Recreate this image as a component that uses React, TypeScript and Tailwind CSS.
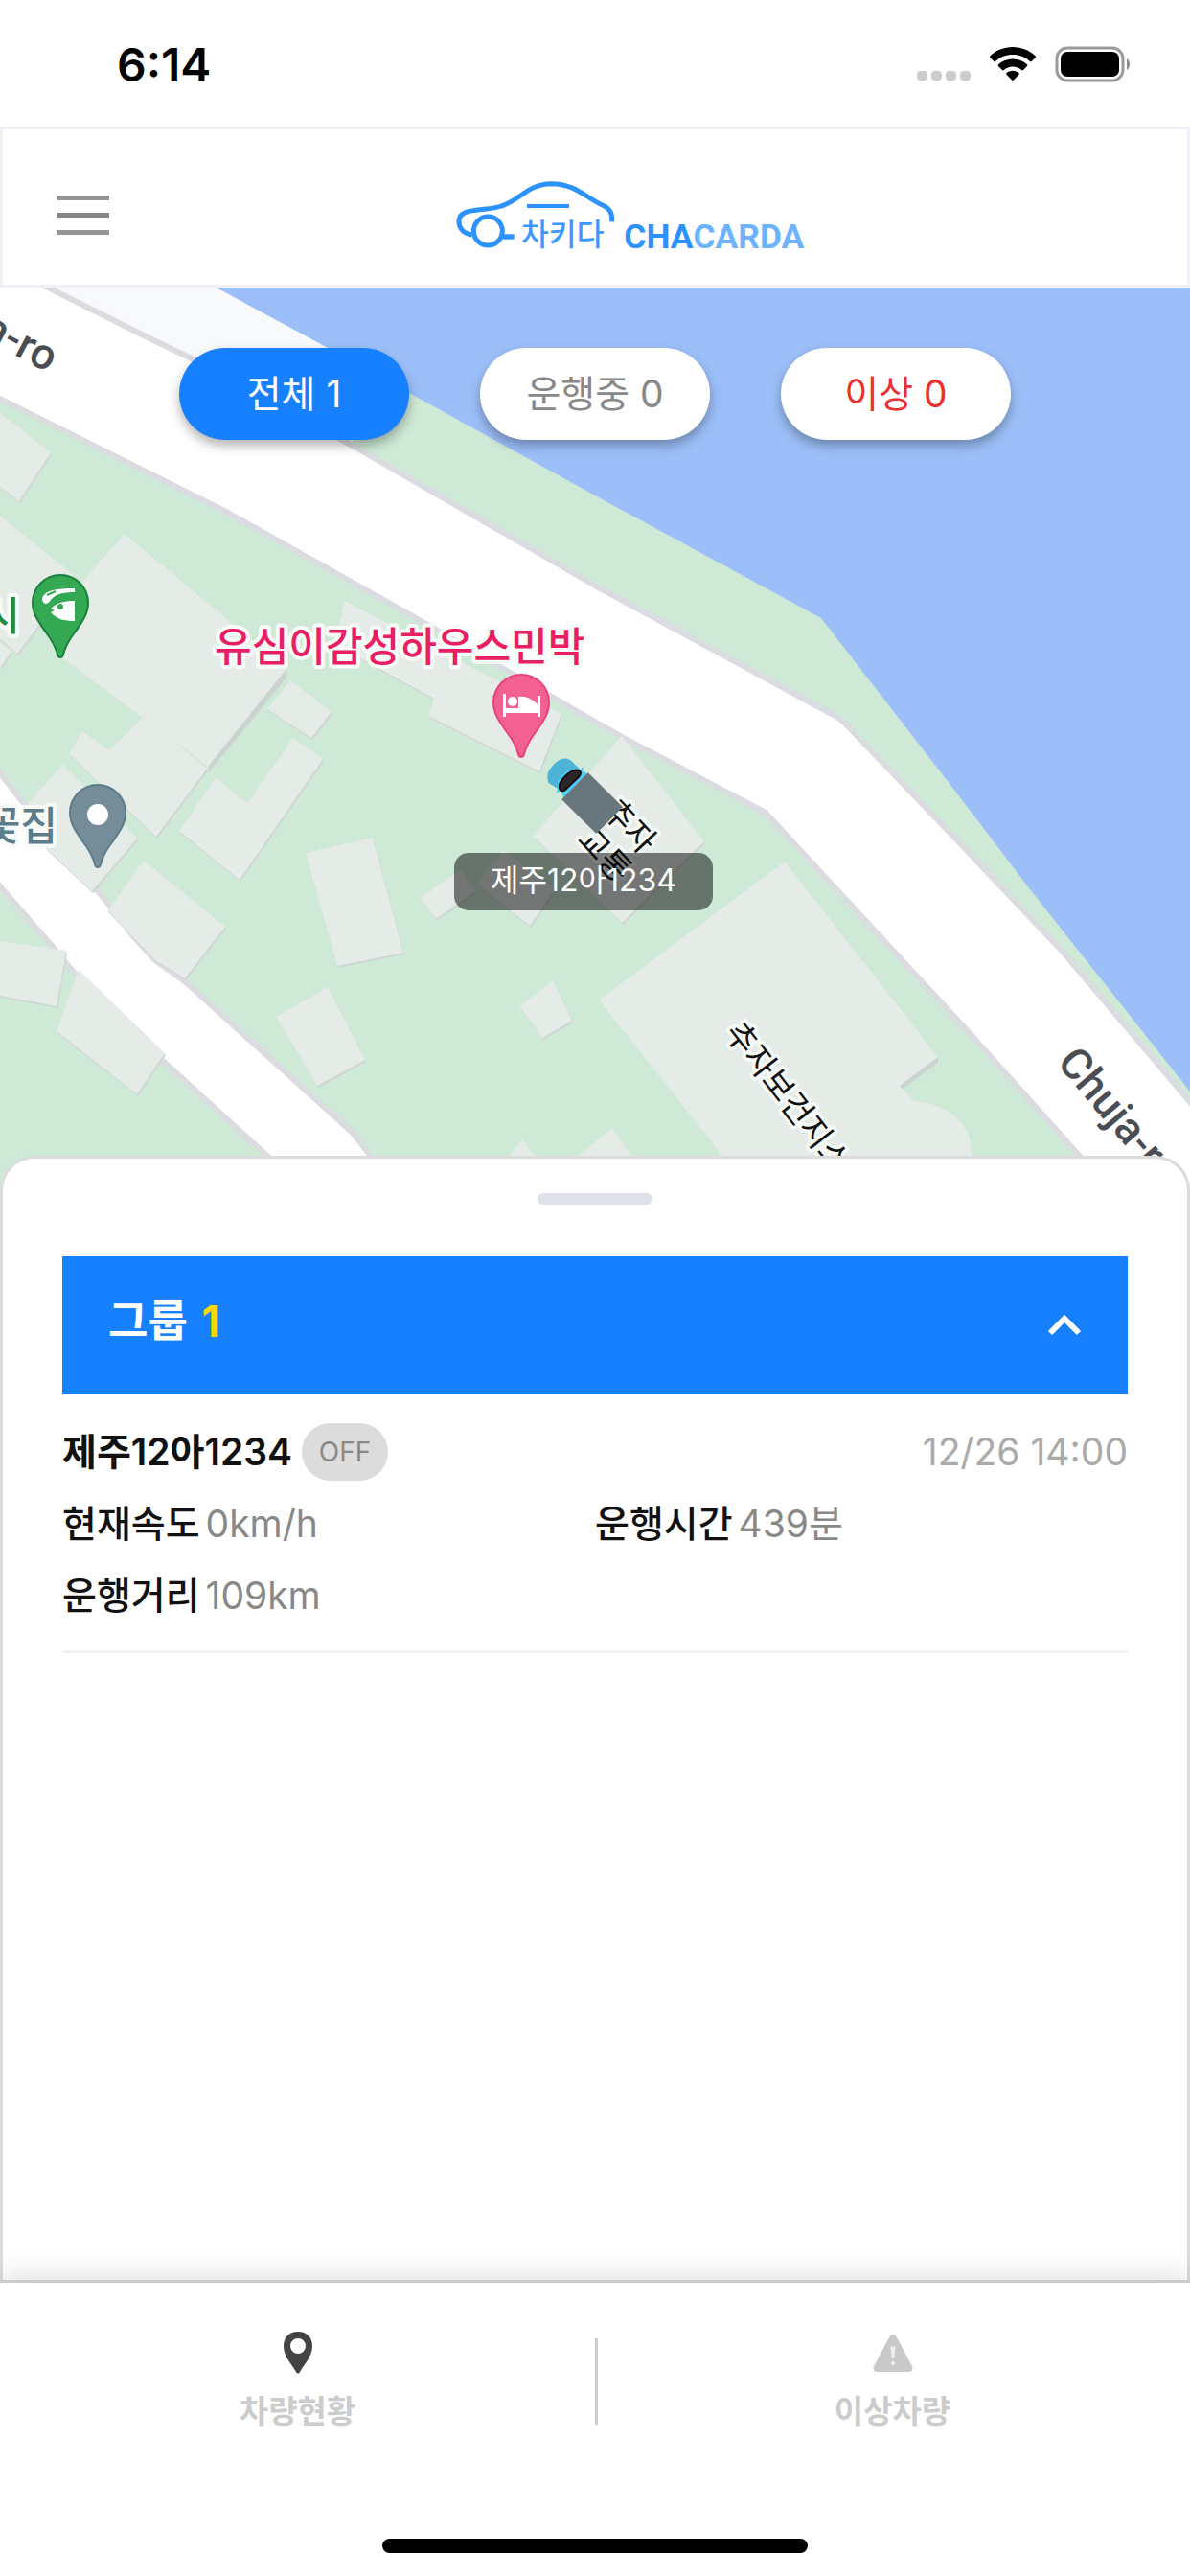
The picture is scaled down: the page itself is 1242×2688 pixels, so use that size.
import { useState } from "react";
import clsx from "clsx";

const filters = [
  { id: "all", label: "전체", count: 1, color: "text-[#888888]" },
  { id: "running", label: "운행중", count: 0, color: "text-[#888888]" },
  { id: "error", label: "이상", count: 0, color: "text-[#ee2f2f]" },
];

const vehicle = {
  plate: "제주12아1234",
  status: "OFF",
  updatedAt: "12/26 14:00",
  stats: [
    { label: "현재속도", value: "0km/h" },
    { label: "운행시간", value: "439분" },
    { label: "운행거리", value: "109km" },
  ],
};

const buildings = [
  "0,431 53,472 20,523 0,508",
  "0,538 77,600 50,640 18,682 0,667",
  "0,670 12,680 0,697",
  "360,627 586,745 563,805 447,747 453,729 349,672",
  "303,710 346,743 325,770 279,740",
  "86,763 114,783 150,748 216,802 163,873 72,787",
  "65,798 143,875 96,930 48,885 28,840",
  "150,898 235,967 193,1021 162,1002 112,950",
  "225,812 258,838 306,770 337,792 250,918 187,867",
  "319,890 389,874 421,994 352,1008",
  "342,1030 381,1106 331,1133 288,1061",
  "481,907 495,931 455,959 438,937",
  "524,887 580,927 553,966 498,923",
  "577,1023 597,1065 566,1083 542,1050",
  "0,982 69,992 59,1050 0,1039",
  "82,1012 172,1099 143,1142 59,1076",
  "545,1188 590,1250 500,1250",
  "639,1177 690,1250 550,1250",
  "649,768 735,878 649,963 556,872",
];

const pinPath =
  "M30 1C14 1 1 14 1 30c0 12 7 21 14 31 7 9 10 15 12 23 1 4 5 4 6 0 2-8 5-14 12-23 7-10 14-19 14-31C59 14 46 1 30 1z";

function StatusBar() {
  return (
    <div className="flex h-[132px] items-start justify-between pt-12 pr-[61px] pl-[122px]">
      <span className="text-[48px] leading-[40px] font-semibold text-black">6:14</span>
      <div className="flex items-center gap-5">
        <svg className="mt-6 h-2.5 w-14" viewBox="0 0 56 10" fill="#cccccc">
          {[0, 15, 30, 45].map((x) => (
            <rect key={x} x={x} width="11" height="10" rx="4" />
          ))}
        </svg>
        <svg className="h-9 w-12" viewBox="0 0 48 36">
          <path d="M24 0c9 0 17.500 3.500 23.700 9.400.5.5.5 1.200 0 1.700l-4 4c-.5.5-1.200.5-1.700 0C37.200 10.600 31 8 24 8S10.800 10.600 6 15.100c-.5.5-1.200.5-1.700 0l-4-4c-.5-.5-.5-1.200 0-1.700C6.500 3.500 15 0 24 0z" />
          <path d="M24 12.500c5.700 0 11 2.200 15 5.800.5.500.5 1.200 0 1.700l-4 4c-.5.5-1.200.5-1.700 0A14 14 0 0 0 24 20.400 14 14 0 0 0 14.700 24c-.5.5-1.200.5-1.700 0l-4-4c-.5-.5-.5-1.200 0-1.700 4-3.600 9.300-5.800 15-5.800z" />
          <path d="M24 24.800c2.400 0 4.600.9 6.400 2.300.5.500.5 1.200.1 1.700l-5.600 5.800c-.5.5-1.300.5-1.800 0l-5.600-5.800c-.4-.5-.4-1.200.1-1.700 1.800-1.400 4-2.300 6.400-2.300z" />
        </svg>
        <svg className="h-[38px] w-20" viewBox="0 0 80 38">
          <rect x="2" y="2" width="69" height="34" rx="11" fill="none" stroke="#9a9a9a" strokeWidth="3" />
          <rect x="6" y="6" width="61" height="26" rx="7" />
          <path d="M75 13c4 2 4 10 0 12z" fill="#8c8c8c" />
        </svg>
      </div>
    </div>
  );
}

function Logo() {
  return (
    <svg
      className="h-[69px] w-[360px] shrink-0 overflow-visible"
      viewBox="111 57 1080 207"
      role="img"
      aria-label="차키다 CHACARDA"
    >
      <g fill="none" stroke="#2b92ff">
        <path
          d="M158 222C130 218 117 200 117 180c0-20 13-28 33-32 40-8 70-6 100-16 60-18 80-68 155-70 75 0 105 40 155 64 28 12 38 24 36 55"
          strokeWidth="15"
        />
        <circle cx="208" cy="210" r="45" strokeWidth="15" />
        <path d="M255 228h35" strokeWidth="16" />
        <path d="M330 132h132" strokeWidth="12" />
      </g>
      <text x="312" y="256" fontSize="94" fontWeight="500" fill="#3a99ff" className="font-['Noto_Sans_CJK_KR',sans-serif]">
        차키다
      </text>
      <text x="634" y="263" fontSize="106" fontWeight="700" fill="#2b92ff" className="font-['Roboto',sans-serif]">
        CHA<tspan fill="#6db3ff">CARDA</tspan>
      </text>
    </svg>
  );
}

function Truck() {
  return (
    <g transform="translate(560 770) scale(0.3333)">
      <path d="M38 142C30 118 34 106 50 88C68 68 86 58 106 70L136 98L72 162Z" fill="#4cb4d6" />
      <path d="M60 174L66 160C60 126 96 94 130 98L138 98L146 90L144 104L160 112L86 190L76 166Z" fill="#45d0fa" />
      <path
        d="M72 158C66 138 104 98 130 101C140 104 140 112 134 120L88 164C80 168 74 166 72 158Z"
        fill="#2a2726"
        stroke="#1b0c0a"
        strokeWidth="6"
      />
      <path d="M163 110L270 216L187 300L80 194Z" fill="#68767d" />
      <path d="M163 110L80 194" stroke="#85696c" strokeWidth="4" />
    </g>
  );
}

function MapCanvas() {
  return (
    <svg
      className="h-full w-full font-['Noto_Sans_CJK_KR',sans-serif]"
      viewBox="0 300 1242 942"
      preserveAspectRatio="xMidYMid slice"
    >
      <rect y="300" width="1242" height="942" fill="#cee9d6" />
      <path d="M225 300L340 362L621 517L857 645L992 819L1075 928L1242 1139V300Z" fill="#9cbff9" />
      <path d="M30 290L207 290L340 362L368 378L368 463Z" fill="#f8f9fb" />

      {/* roads */}
      <g fill="#ffffff" stroke="#dbdce1" strokeWidth="6" strokeLinejoin="round">
        <path d="M-20 265L50 300L150 350L200 374L368 465L621 611L842 731L870 746Q878 750 885 758L1000 878L1109 993L1242 1150L1300 1220V1260H1170L1124 1203L1010 1076L799 848L649 769L621 753L436 646L238 535L-10 411Z" />
        <path d="M-10 795L0 807L26 840L113 943L139 977L162 1002L194 1025L368 1182L388 1208L420 1260H335L281 1208L170 1107L79 1017L55 988L0 925L-10 912Z" />
      </g>

      {/* buildings, each with a thin shade on its lower right side */}
      {buildings.map((points) => (
        <g key={points}>
          <polygon points={points} fill="#cfd6d4" transform="translate(1 2)" />
          <polygon points={points} fill="#e5ebe7" />
        </g>
      ))}
      <path d="M299 698V707L218 806L217 795Z" fill="#cbd3d1" />
      <path d="M130 557L299 698L217 800L63 685L50 662L89 603Z" fill="#e5ebe7" />
      <path d="M979 1103V1109L941 1137L939 1130Z" fill="#cbd3d1" />
      <path
        d="M819 899L979 1103L939 1133L954 1149C985 1151 1013 1170 1014 1200L1015 1250H783L754 1206L627 1046V1042Z"
        fill="#e5ebe7"
      />

      {/* street and place names */}
      <g className="font-['Roboto',sans-serif]" fill="#4a4e54" fontSize="45" fontWeight="500">
        <text transform="translate(50 389) rotate(28)" textAnchor="end">
          Chuja-ro
        </text>
        <text transform="translate(1102 1109) rotate(50)">Chuja-ro</text>
      </g>
      <g fontSize="34" fill="#111111" stroke="#f5faf7" strokeWidth="7" strokeLinejoin="round" paintOrder="stroke">
        <text transform="translate(755 1078) rotate(52)">추자보건지소</text>
        <text transform="translate(627 847) rotate(47)">추자</text>
        <text transform="translate(601 877) rotate(47)">교통</text>
      </g>
      <g fontSize="42" fontWeight="500" stroke="#f7fbf8" strokeWidth="8" strokeLinejoin="round" paintOrder="stroke">
        <text x="224" y="690" fill="#e91e63">
          유심이감성하우스민박
        </text>
        <text x="21" y="658" textAnchor="end" fill="#1e8e3e">
          시
        </text>
        <text x="60" y="877" textAnchor="end" fill="#5b7c8a">
          꽃집
        </text>
      </g>

      {/* place markers */}
      <g transform="translate(33 599)">
        <path d={pinPath} fill="#34a853" stroke="#188038" strokeWidth="2" />
        <path d="M11 25C14 17 26 15 45 15v4C32 19 25 21 20 27c-2 3-4 4-6 4-2-1-3-3-3-6z" fill="#ffffff" />
        <path d="M45 28v21c-11 0-19-2-25-9l4-2-4-2c6-6 14-8 25-8z" fill="#ffffff" />
        <circle cx="30" cy="34" r="3" fill="#34a853" />
        <path d="M16 22l9-4" stroke="#34a853" strokeWidth="2" />
      </g>
      <g transform="translate(72 818)">
        <path d={pinPath} fill="#758d99" stroke="#5b7c8a" strokeWidth="2" />
        <circle cx="30" cy="32" r="11" fill="#ffffff" />
      </g>
      <g transform="translate(514 703)">
        <path d={pinPath} fill="#f26192" stroke="#ec407a" strokeWidth="2" />
        <g fill="#ffffff">
          <path d="M11 21h3v15h33V23h3v22h-3v-4H14v4h-3z" />
          <circle cx="21" cy="29" r="5" />
          <path d="M27 24c8-1 14 2 20 8l3-8v12H27z" />
        </g>
      </g>
      <Truck />
    </svg>
  );
}

function TabIcon({ name }: { name: string }) {
  if (name === "vehicles") {
    return (
      <svg className="h-[45px] w-[30px]" viewBox="0 0 30 45">
        <path
          fillRule="evenodd"
          fill="#444444"
          d="M15 0C6 0 0 6 0 15c0 11 8 18 13 27 1 2 3 2 4 0 5-9 13-16 13-27C30 6 24 0 15 0zm0 7a8 8 0 1 1 0 16 8 8 0 0 1 0-16z"
        />
      </svg>
    );
  }
  return (
    <svg className="h-[45px] w-[42px]" viewBox="0 0 42 45">
      <path d="M21 3c2 0 3 1 4 3l16 30c1 3 0 6-3 6H4c-3 0-4-3-3-6L17 6c1-2 2-3 4-3z" fill="#c9c9c9" />
      <path d="M20 17h2l-1 10z" fill="#eeeeee" stroke="#eeeeee" strokeWidth="3" />
      <circle cx="21" cy="33" r="2" fill="#eeeeee" />
    </svg>
  );
}

const tabs = [
  { id: "vehicles", label: "차량현황" },
  { id: "alerts", label: "이상차량" },
];

export default function App() {
  const [filter, setFilter] = useState("all");
  const [open, setOpen] = useState(true);

  return (
    <div className="flex min-h-screen flex-col bg-white font-['Inter','Noto_Sans_CJK_KR',sans-serif]">
      <StatusBar />

      <header className="grid h-[168px] grid-cols-[1fr_auto_1fr] items-center border-[3px] border-[#f0f1f6] pt-4">
        <button type="button" aria-label="메뉴" className="ml-[57px] flex w-[54px] flex-col gap-[13px]">
          <span className="h-[5px] bg-[#959595]" />
          <span className="h-[5px] bg-[#858585]" />
          <span className="h-[5px] bg-[#959595]" />
        </button>
        <div className="flex justify-center pl-[72px]">
          <Logo />
        </div>
      </header>

      <main className="flex flex-1 flex-col">
        {/* Map */}
        <section className="relative h-[942px] overflow-hidden">
          <MapCanvas />
          <div className="absolute inset-x-0 top-[63px] flex justify-center gap-[74px]">
            {filters.map((item) => (
              <button
                key={item.id}
                type="button"
                onClick={() => setFilter(item.id)}
                className={clsx(
                  "h-24 w-60 rounded-full text-[39px] leading-[60px] shadow-[0_6px_12px_rgba(0,0,0,0.3)]",
                  filter === item.id ? "bg-[#1780ff] text-white" : ["bg-white", item.color]
                )}
              >
                {item.label} {item.count}
              </button>
            ))}
          </div>
          <div className="absolute top-[590px] left-1/2 flex h-[60px] w-[270px] -translate-x-[147px] items-center justify-center rounded-[15px] bg-black/50 pb-0.5 text-[32px] leading-[48px] text-white">
            {vehicle.plate}
          </div>
        </section>

        {/* Bottom sheet */}
        <section className="relative -mt-9 flex-1 rounded-t-[36px] border-x-[3px] border-t-[3px] border-[#dcdcdc] bg-white px-[62px] pt-9">
          <div className="mx-auto h-3 w-[120px] rounded-full bg-[#dee1e7]" />
          <button
            type="button"
            aria-expanded={open}
            onClick={() => setOpen(!open)}
            className="mt-[54px] flex h-36 w-full items-center justify-between bg-[#1780ff] pr-12 pl-12 text-[45px] leading-[60px] font-bold text-white"
          >
            <span className="pb-2">
              그룹 <span className="ml-1 text-[#ffd800]">1</span>
            </span>
            <svg className={clsx("h-6 w-9", !open && "rotate-180")} viewBox="0 0 36 24" fill="none">
              <path d="M3 20L18 5l15 15" stroke="#ffffff" strokeWidth="6" />
            </svg>
          </button>

          {open && (
            <article className="border-b-[3px] border-[#f2f2f2] pt-[30px] pb-[27px] text-[39px] leading-[60px]">
              <div className="flex items-center justify-between">
                <h2 className="flex items-center gap-2.5 font-semibold text-[#111111]">
                  {vehicle.plate}
                  <span className="h-[60px] w-[90px] rounded-full bg-[#dcdcdc] text-center text-[28px] font-normal text-[#888888]">
                    {vehicle.status}
                  </span>
                </h2>
                <time className="text-[#aaaaaa]">{vehicle.updatedAt}</time>
              </div>
              <dl className="mt-[15px] grid grid-cols-2 gap-y-[15px]">
                {vehicle.stats.map((stat) => (
                  <div key={stat.label} className="flex gap-1.5">
                    <dt className="font-medium text-[#111111]">{stat.label}</dt>
                    <dd className="text-[#888888]">{stat.value}</dd>
                  </div>
                ))}
              </dl>
            </article>
          )}
        </section>
      </main>

      {/* Tabs */}
      <footer className="relative border-t-[3px] border-[#cccccc] bg-white pt-[51px] pb-6 shadow-[0_-3px_30px_rgba(0,0,0,0.14)]">
        <nav className="grid grid-cols-2 items-center">
          {tabs.map((tab) => (
            <button
              key={tab.id}
              type="button"
              className="flex flex-col items-center gap-[18px] text-[33px] leading-10 font-bold text-[#cccccc]"
            >
              <TabIcon name={tab.id} />
              {tab.label}
            </button>
          ))}
          <span className="absolute left-1/2 h-[90px] w-[3px] bg-[#cccccc]" />
        </nav>
        <div className="mx-auto mt-[113px] h-[15px] w-[444px] rounded-full bg-black" />
      </footer>
    </div>
  );
}
